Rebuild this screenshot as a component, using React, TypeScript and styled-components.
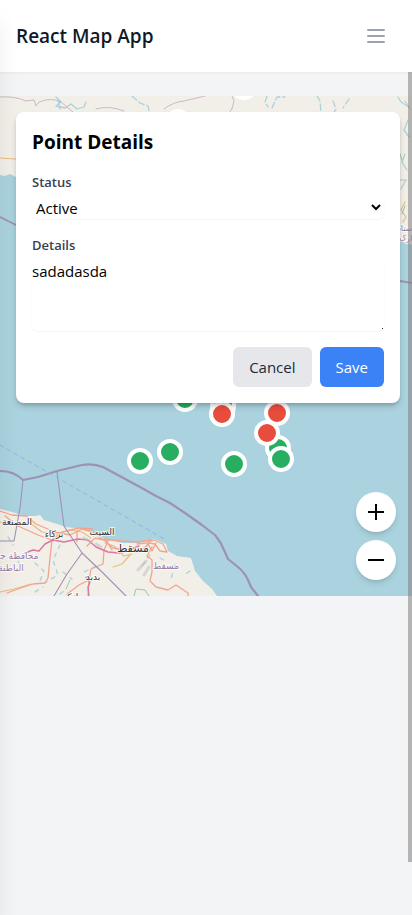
import React, { useState } from "react";
import styled, { createGlobalStyle } from "styled-components";

const GlobalStyle = createGlobalStyle`
  *, *::before, *::after { box-sizing: border-box; }
  body {
    margin: 0;
    background: #f3f4f6;
    color: #000;
    font-family: "Segoe UI", "Open Sans", "Noto Sans", sans-serif;
    font-size: 15px;
    line-height: 24px;
  }
  button, select, textarea { font: inherit; color: inherit; }
`;

const Page = styled.div`
  position: relative;
  min-height: 100vh;
  overflow: hidden;
`;

const Drawer = styled.aside`
  position: fixed;
  top: 0;
  bottom: 0;
  right: 100%;
  width: 256px;
  z-index: 30;
  background: #fff;
  box-shadow: 0 20px 25px -5px rgba(0, 0, 0, 0.1), 0 8px 10px -6px rgba(0, 0, 0, 0.1);
`;

const Header = styled.header`
  position: relative;
  z-index: 20;
  display: flex;
  align-items: center;
  justify-content: space-between;
  height: 72px;
  padding: 0 16px;
  background: #fff;
  box-shadow: 0 1px 2px rgba(0, 0, 0, 0.05);
`;

const Brand = styled.h1`
  margin: 0;
  color: #111827;
  font-size: 19px;
  font-weight: 600;
  line-height: 28px;
`;

const MenuButton = styled.button`
  display: flex;
  padding: 8px;
  border: 0;
  background: none;
  color: #9ca3af;
`;

const ScrollThumb = styled.div`
  position: absolute;
  top: 72px;
  right: 0;
  z-index: 15;
  width: 4px;
  height: 790px;
  background: rgba(128, 128, 128, 0.55);
`;

const MapArea = styled.main`
  position: relative;
  height: 500px;
  margin-top: 24px;
  padding: 16px 12px 0 16px;
  overflow: hidden;
  background: #aad3df;
`;

const MapDrawing = styled.svg`
  position: absolute;
  inset: 0;
  width: 100%;
  height: 100%;
`;

const Panel = styled.form`
  position: relative;
  display: flex;
  flex-direction: column;
  gap: 16px;
  padding: 16px;
  border-radius: 8px;
  background: #fff;
  box-shadow: 0 4px 6px -1px rgba(0, 0, 0, 0.2), 0 2px 4px -2px rgba(0, 0, 0, 0.2);
`;

const PanelTitle = styled.h2`
  margin: 0;
  font-size: 19px;
  font-weight: 700;
  line-height: 28px;
`;

const Field = styled.div`
  display: flex;
  flex-direction: column;
  gap: 4px;
`;

const Label = styled.label`
  color: #374151;
  font-size: 13px;
  font-weight: 600;
  line-height: 20px;
`;

const Select = styled.select`
  width: 100%;
  height: 23px;
  padding: 0;
  border: 0;
  border-radius: 6px;
  background: #fff;
  box-shadow: 0 1px 2px rgba(0, 0, 0, 0.05);
`;

const TextArea = styled.textarea`
  display: block;
  width: 100%;
  height: 72px;
  padding: 0;
  border: 0;
  border-radius: 6px;
  background: #fff;
  box-shadow: 0 1px 2px rgba(0, 0, 0, 0.05);

  &::-webkit-resizer {
    background: linear-gradient(#333, #333) no-repeat right 1px bottom 2px / 1px 1px;
  }
`;

const Actions = styled.div`
  display: flex;
  justify-content: flex-end;
  gap: 8px;
`;

const ActionButton = styled.button<{ $primary?: boolean }>`
  height: 40px;
  padding: 0 16px;
  border: 0;
  border-radius: 6px;
  background: ${(p) => (p.$primary ? "#3b82f6" : "#e5e7eb")};
  color: ${(p) => (p.$primary ? "#fff" : "#1f2937")};
`;

const ZoomControls = styled.div`
  position: absolute;
  right: 16px;
  bottom: 16px;
  display: flex;
  flex-direction: column;
  gap: 8px;
`;

const ZoomButton = styled.button`
  display: flex;
  align-items: center;
  justify-content: center;
  width: 40px;
  height: 40px;
  padding: 0;
  border: 0;
  border-radius: 50%;
  background: #fff;
  box-shadow: 0 4px 6px -1px rgba(0, 0, 0, 0.12), 0 2px 4px -2px rgba(0, 0, 0, 0.12);
`;

const MapText = styled.text<{ $area?: boolean }>`
  fill: ${(p) => (p.$area ? "#967aa3" : "#333")};
  stroke: #fff;
  stroke-width: 2px;
  stroke-opacity: 0.7;
  paint-order: stroke;
  font-family: "DejaVu Sans", sans-serif;
  text-anchor: middle;
`;

const GREEN = "#27ae60";
const RED = "#e74c3c";

const points: { x: number; y: number; color: string }[] = [
  { x: 244, y: 87, color: GREEN },
  { x: 178, y: 122, color: GREEN },
  { x: 185, y: 399, color: GREEN },
  { x: 223, y: 406, color: GREEN },
  { x: 222, y: 414, color: RED },
  { x: 277, y: 413, color: RED },
  { x: 278, y: 448, color: GREEN },
  { x: 267, y: 433, color: RED },
  { x: 281, y: 459, color: GREEN },
  { x: 234, y: 464, color: GREEN },
  { x: 170, y: 452, color: GREEN },
  { x: 140, y: 461, color: GREEN },
];

const places: { x: number; y: number; size: number; name: string; area?: boolean }[] = [
  { x: 17, y: 525, size: 9, name: "المصنعة" },
  { x: 54, y: 537, size: 9, name: "بركاء" },
  { x: 102, y: 535, size: 9, name: "السيب" },
  { x: 133, y: 552, size: 11, name: "مسقط" },
  { x: 166, y: 569, size: 9, name: "مسقط", area: true },
  { x: 93, y: 580, size: 9, name: "بدبد" },
  { x: 18, y: 559, size: 9, name: "محافظة جـ", area: true },
  { x: 11, y: 571, size: 9, name: "الباطنة", area: true },
  { x: 69, y: 600, size: 9, name: "إزكي" },
  { x: 411, y: 231, size: 8, name: "شهرستان", area: true },
  { x: 409, y: 241, size: 8, name: "کنارک", area: true },
];

function MapPicture() {
  return (
    <MapDrawing viewBox="0 96 412 500" preserveAspectRatio="xMidYMid slice" aria-hidden="true">
      <rect x="0" y="96" width="412" height="500" fill="#aad3df" />
      <path
        fill="#f2efe9"
        d="M0 96H412V245L405 243L398 238L380 226L360 218L16 177L10 174L5 176L0 175Z"
      />
      <path
        fill="#f2efe9"
        d="M0 509L12 512L25 516L35 516L40 515L44 520L54 523L66 527L82 529L94 534L108 540L122 543L139 543L149 540L154 539L166 544L168 551L177 556L191 558L195 571L203 581L212 589L217 596H0Z"
      />
      <g fill="none" strokeLinecap="round" strokeLinejoin="round">
        <g stroke="#a9d2dc" strokeWidth="1.3">
          <path d="M56 97l5 5-5 4 9 2 6-4 6 5 7-2 2-5M58 99l2 10" />
          <path
            strokeDasharray="6 3"
            d="M132 96l8 7 8 3 2 9M267 96l-2 6 3 5M317 96l3 5 1 12M333 101l3 8-3 5M349 99l-6 9M272 108l5-11h8"
          />
          <path d="M398 97l3 5 8 5M408 120l-4 10 5 7M405 154l-3 8 5 8M401 189l5-9" />
          <path
            strokeDasharray="4 5"
            d="M60 545l-7 15 5 15-15 9M35 563l9 8-4 10M15 553l4 10M63 572l9 7M8 537l5 8M96 566l-12 6M150 555l-8 11M175 565l-4 14M190 571l-7 5M160 558l7 4M35 592l8-5M60 594l6-5"
          />
        </g>
        <g stroke="#cdb8c5" strokeWidth="1">
          <path d="M0 97q15-1 26 4l8-1 2 6 3-4q12-5 22 0l12 10M96 109q13-4 28 2M164 109q9-7 20-8l21-5M232 96l2 5-2 8M230 112l2-4M398 180h8M405 101l5 8" />
        </g>
        <g stroke="#e4bf80" strokeWidth="1.2">
          <path d="M0 158l16 1M405 202l-4 8 5 7-3 5M0 522l15 2 15-1 12 9 15 2 13-4 12 2 9 6M0 592l14-3 17-5M105 543l9 3 10 10 8-2M113 567l9-3 8-9" />
        </g>
        <g stroke="#f3a58c" strokeWidth="1.3">
          <path d="M0 511l12 4 14 1 10 8 19 8 15 3 12-6 11 3 9 7 20 2 16 1 14-2M5 516l13 10 20 9 14 5M52 540l-2 18-2 20-3 5-12 1-15 5-11 4M77 531v11M87 546l8-8 9 2 9 8 15 2" />
          <path d="M52 540l10-8 17-4 14 1M104 550l-1 14-12 5-2 11-10 5-12 9M104 550l5-11M105 539l7 11M89 580l-1 16M152 547l-5 9 5 4v12l-2 9 6 6 12 3 8-5 12 8v3" />
          <path d="M137 544l9-1 8-3 9 4 4 8-7-1-5-7-6-1-7 8-7 1M147 542l5 9 4-8" />
        </g>
        <path stroke="#dc779d" strokeWidth="1.4" d="M25 553l8-3 6 1 6-7 8-4 11 2 14-3 10 1 8 7 12 5 11 1 10-3 10-4M86 577l4 5-2 5 1 10" />
        <path stroke="#98c99f" strokeWidth="1" d="M134 596l2-7 9 1 4 6M70 580l-4 9M399 151l3 9M405 206l-3 8" />
        <g stroke="#c5bbbd" strokeWidth="3" opacity=".55">
          <path d="M96 544l5 3M91 542l-7-4M146 561l-8 9M149 567l-5 8" />
        </g>
        <g stroke="#9e91b4">
          <path strokeWidth="1.8" d="M0 217l16 8M400 281l12 2" />
          <path
            strokeWidth="2.2"
            d="M0 471Q14 471 23 480L38 477L57 471L82 465Q93 463 103 467L140 487L156 496L170 503L185 513L202 525L215 535Q221 542 224 550L228 559L238 567Q245 573 248 580L251 587L258 596"
          />
          <path strokeWidth="1.1" d="M23 480L20 508L14 541H0M57 472L64 526L82 553L102 572L126 596M82 553L67 574L54 596" />
        </g>
        <path stroke="#8eb5e2" strokeWidth="1" strokeDasharray="4 4" d="M0 445L166 540" />
      </g>
      {places.map((p) => (
        <MapText key={`${p.name}-${p.x}`} x={p.x} y={p.y} fontSize={p.size} $area={p.area}>
          {p.name}
        </MapText>
      ))}
      {points.map((p) => (
        <circle key={`${p.x}-${p.y}`} cx={p.x} cy={p.y} r="11" fill={p.color} stroke="#fff" strokeWidth="4" />
      ))}
    </MapDrawing>
  );
}

export default function App() {
  const [status, setStatus] = useState("active");
  const [details, setDetails] = useState("sadadasda");

  return (
    <Page>
      <GlobalStyle />
      <Drawer aria-hidden="true" />
      <Header>
        <Brand>React Map App</Brand>
        <MenuButton type="button" aria-label="Open menu">
          <svg width="24" height="24" viewBox="0 0 24 24" fill="none" stroke="currentColor" strokeWidth="2" strokeLinecap="round">
            <path d="M4 6h16M4 12h16M4 18h16" />
          </svg>
        </MenuButton>
      </Header>
      <ScrollThumb />
      <MapArea>
        <MapPicture />
        <Panel onSubmit={(e) => e.preventDefault()}>
          <PanelTitle>Point Details</PanelTitle>
          <Field>
            <Label htmlFor="status">Status</Label>
            <Select id="status" value={status} onChange={(e) => setStatus(e.target.value)}>
              <option value="active">Active</option>
              <option value="inactive">Inactive</option>
            </Select>
          </Field>
          <Field>
            <Label htmlFor="details">Details</Label>
            <TextArea id="details" rows={3} value={details} onChange={(e) => setDetails(e.target.value)} />
          </Field>
          <Actions>
            <ActionButton type="button">Cancel</ActionButton>
            <ActionButton type="submit" $primary>
              Save
            </ActionButton>
          </Actions>
        </Panel>
        <ZoomControls>
          <ZoomButton type="button" aria-label="Zoom in">
            <svg width="24" height="24" viewBox="0 0 24 24" stroke="#000" strokeWidth="2">
              <path d="M4 12h16M12 4v16" />
            </svg>
          </ZoomButton>
          <ZoomButton type="button" aria-label="Zoom out">
            <svg width="24" height="24" viewBox="0 0 24 24" stroke="#000" strokeWidth="2">
              <path d="M4 12h16" />
            </svg>
          </ZoomButton>
        </ZoomControls>
      </MapArea>
    </Page>
  );
}
